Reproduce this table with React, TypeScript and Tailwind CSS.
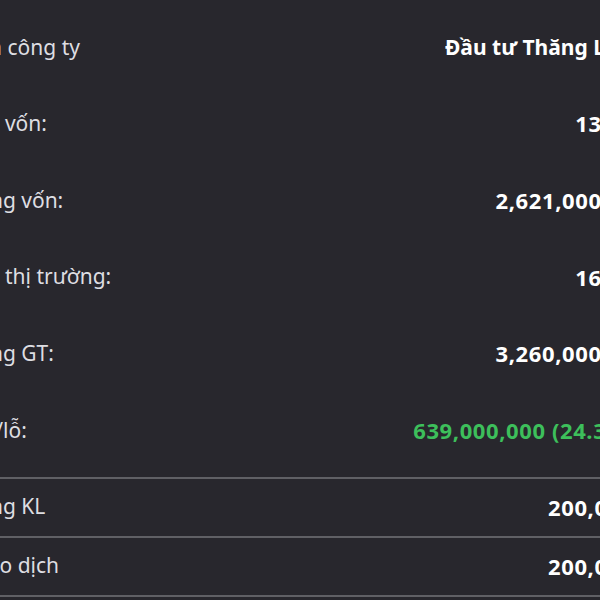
import React from "react";

const topRows: { label: string; value: string; green?: boolean; text?: boolean }[] = [
  { label: "Tên công ty", value: "Đầu tư Thăng Long", text: true },
  { label: "Giá vốn:", value: "13,100" },
  { label: "Tổng vốn:", value: "2,621,000,000" },
  { label: "Giá thị trường:", value: "16,300" },
  { label: "Tổng GT:", value: "3,260,000,000" },
  { label: "Lãi/lỗ:", value: "639,000,000 (24.38%)", green: true },
];

const bottomRows = [
  { label: "Tổng KL", value: "200,000" },
  { label: "Giao dịch", value: "200,000" },
];

export default function App() {
  return (
    <div
      className="w-[600px] h-[600px] overflow-hidden bg-[#28272d]"
      style={{ fontFamily: '"Noto Sans", "Open Sans", sans-serif' }}
    >
      <div className="ml-[-33px] w-[681px] pt-[9px]">
        <div className="flex flex-col pb-[8px]">
          {topRows.map((r) => (
            <div
              key={r.label}
              className={
                "flex h-[76.6px] items-center justify-between " + (r.text ? "pr-[3px]" : "")
              }
            >
              <span className="whitespace-nowrap text-[21px] text-[#dedee2]">{r.label}</span>
              <span
                className={
                  "whitespace-nowrap font-bold " +
                  (r.text ? "text-[21px] " : "text-[22px] tracking-[0.6px] ") +
                  (r.green ? "text-[#3dbf5b]" : "text-white")
                }
              >
                {r.value}
              </span>
            </div>
          ))}
        </div>
        {bottomRows.map((r) => (
          <div key={r.label} className="border-t-2 border-[#606065]">
            <div className="flex h-[57px] items-center justify-between pr-[14px]">
              <span className="whitespace-nowrap text-[21px] text-[#dedee2]">{r.label}</span>
              <span className="whitespace-nowrap text-[22px] tracking-[0.6px] font-bold text-white">
                {r.value}
              </span>
            </div>
          </div>
        ))}
        <div className="border-t-2 border-[#606065]" />
      </div>
    </div>
  );
}
